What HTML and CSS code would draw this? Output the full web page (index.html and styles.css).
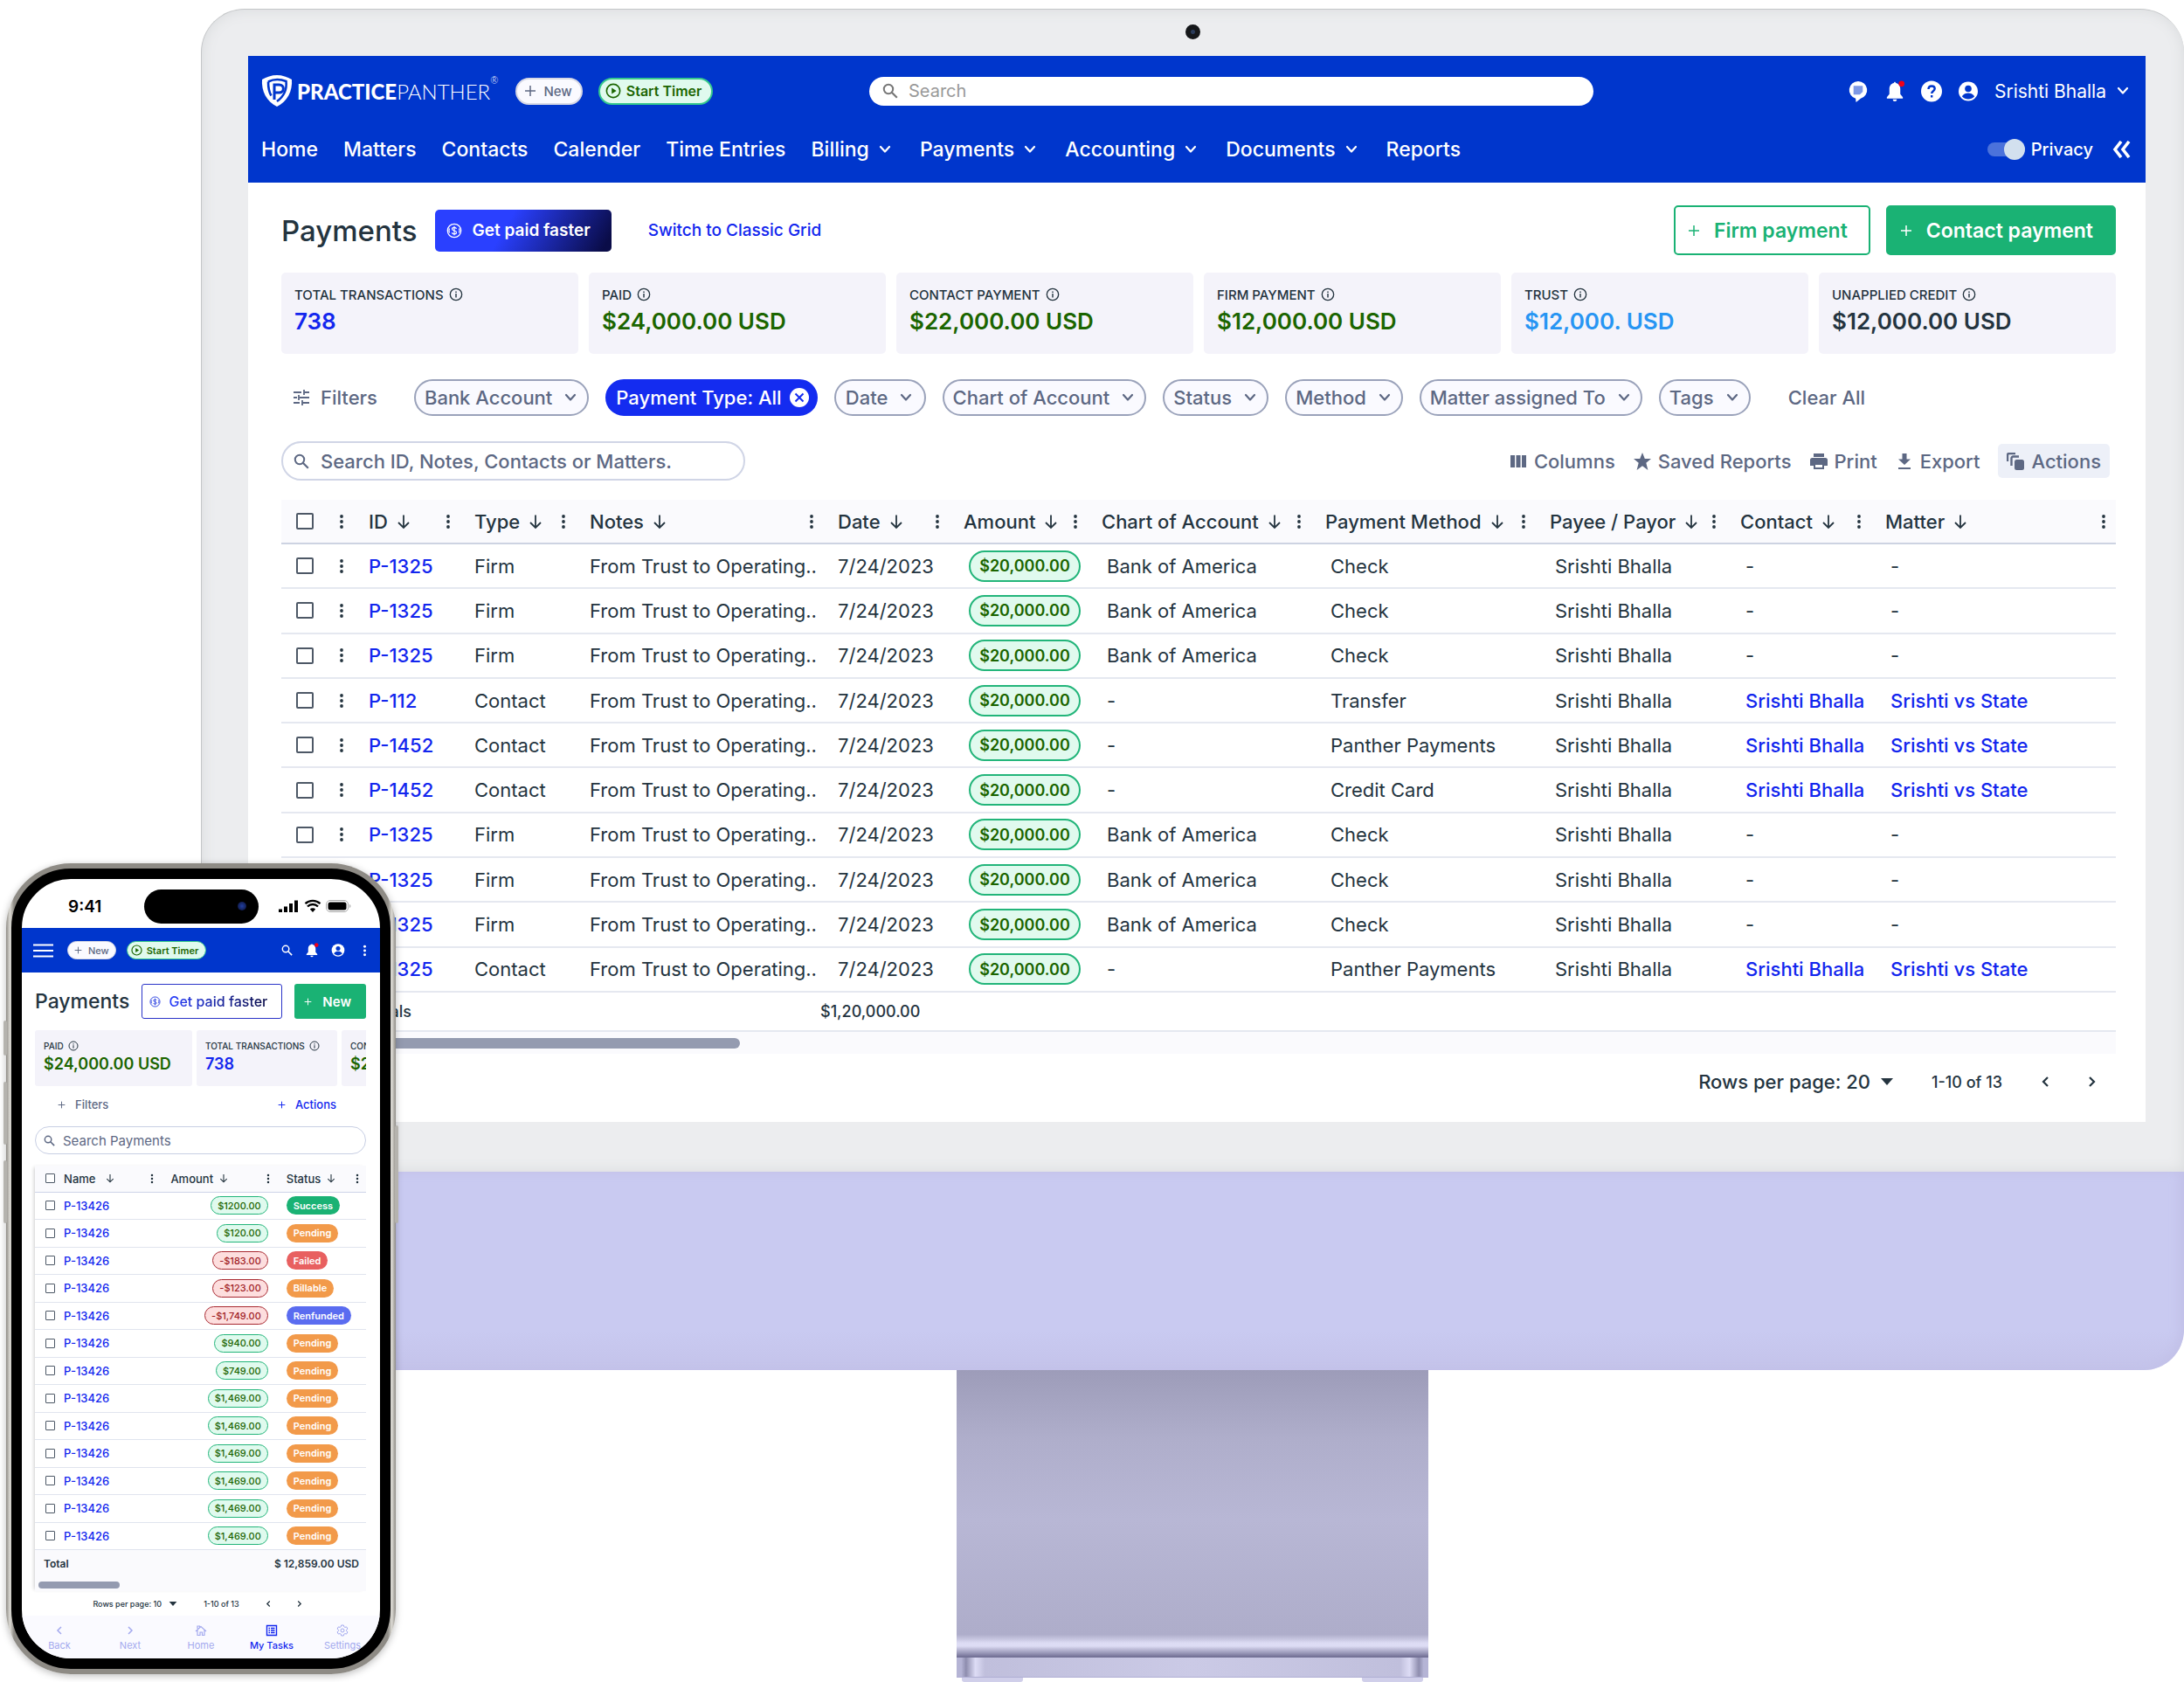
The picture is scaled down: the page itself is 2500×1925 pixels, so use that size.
FILE: index.html
```html
<!DOCTYPE html>
<html lang="en">
<head>
<meta charset="utf-8">
<title>PracticePanther Payments</title>
<link rel="stylesheet" href="styles.css">
</head>
<body>
<svg class="sprite" aria-hidden="true">
  <symbol id="chev" viewBox="0 0 14 10"><path d="M2 2l5 5.500 5-5.500" fill="none" stroke="currentColor" stroke-width="2.200" stroke-linecap="round" stroke-linejoin="round"/></symbol>
  <symbol id="down" viewBox="0 0 16 18"><path d="M8 1.500v14M2 10l6 6 6-6" fill="none" stroke="currentColor" stroke-width="1.800"/></symbol>
  <symbol id="dots" viewBox="0 0 6 18"><circle cx="3" cy="3" r="1.900"/><circle cx="3" cy="9" r="1.900"/><circle cx="3" cy="15" r="1.900"/></symbol>
  <symbol id="plus" viewBox="0 0 14 14"><path d="M7 1v12M1 7h12" stroke="currentColor" stroke-width="1.500" fill="none"/></symbol>
  <symbol id="glass" viewBox="0 0 18 18"><circle cx="7" cy="7" r="5.200" fill="none" stroke="currentColor" stroke-width="2"/><path d="M10.800 10.800l6 6" stroke="currentColor" stroke-width="2.200"/></symbol>
  <symbol id="info" viewBox="0 0 18 18"><circle cx="9" cy="9" r="7.500" fill="none" stroke="currentColor" stroke-width="1.500"/><path d="M9 8v5M9 5v1.800" stroke="currentColor" stroke-width="1.600"/></symbol>
  <symbol id="play" viewBox="0 0 20 20"><circle cx="10" cy="10" r="8.500" fill="none" stroke="currentColor" stroke-width="1.800"/><path d="M8 6.200l6 3.800-6 3.800z" fill="currentColor"/></symbol>
  <symbol id="coin" viewBox="0 0 18 18"><circle cx="9" cy="9" r="7.700" fill="none" stroke="currentColor" stroke-width="1.300"/><path d="M3.500 6.500a6 6 0 0 0 0 5M14.500 6.500a6 6 0 0 1 0 5M11.500 6.800C11.200 5.700 10.200 5.300 9 5.300c-1.400 0-2.500.6-2.500 1.800 0 2.600 5 1.200 5 3.800 0 1.200-1.100 1.900-2.500 1.900-1.300 0-2.400-.5-2.600-1.700M9 3.800v10.400" fill="none" stroke="currentColor" stroke-width="1.200"/></symbol>
  <symbol id="bell" viewBox="0 0 24 26"><path d="M11 3c0-1.600 2-1.600 2 0 3.800.8 5.500 3.500 5.500 7.500v6L21.500 20v1.500h-19V20l3-3.500v-6C5.500 6.500 7.200 3.800 11 3z" fill="currentColor"/><path d="M9.500 22.500h5a2.500 2.500 0 0 1-5 0z" fill="currentColor"/><circle cx="20" cy="4" r="3.500" fill="#f00018"/></symbol>
  <symbol id="user" viewBox="0 0 24 24"><circle cx="12" cy="12" r="11" fill="currentColor"/><circle cx="12" cy="9" r="3.800" fill="#0036cc"/><path d="M4.800 17.800c2-3 4.500-3.800 7.200-3.800s5.200.8 7.200 3.800c-4 4.300-10.400 4.300-14.400 0z" fill="#0036cc"/></symbol>
  <symbol id="left" viewBox="0 0 10 14"><path d="M8 2L3 7l5 5" fill="none" stroke="currentColor" stroke-width="2.200"/></symbol>
  <symbol id="right" viewBox="0 0 10 14"><path d="M2 2l5 5-5 5" fill="none" stroke="currentColor" stroke-width="2.200"/></symbol>
  <symbol id="caret" viewBox="0 0 14 8"><path d="M0 0h14L7 8z" fill="currentColor"/></symbol>
</svg>

<div class="stage">
<section class="monitor" aria-label="Desktop view">
  <div class="bezel">
    <div class="lens-row"><span class="lens"></span></div>
    <div class="screen">
      <header class="top">
        <div class="top-row">
          <div class="top-left">
            <a class="logo" href="#"><svg class="shield" viewBox="0 0 36 38"><path d="M18 1C12 1 6 3 1 6c-1 13 5 25 17 31C30 31 36 19 35 6 30 3 24 1 18 1z" fill="#fff"/><path d="M8 8.500C14 5.500 22 5.500 28.500 8c1 9-2 17-10.500 23" fill="none" stroke="#0036cc" stroke-width="2.600"/><path d="M8 8.500c0 7 1 12 3.500 16" fill="none" stroke="#0036cc" stroke-width="2.600"/><path d="M15 29V12h5.500c6.500 0 6.500 9 0 9H15" fill="none" stroke="#0036cc" stroke-width="3"/></svg><span><b>PRACTICE</b>PANTHER</span><sup>®</sup></a>
            <button class="chip-new"><svg class="i14"><use href="#plus"/></svg>New</button>
            <button class="chip-timer"><svg class="i18"><use href="#play"/></svg>Start Timer</button>
          </div>
          <label class="top-search"><svg class="i18"><use href="#glass"/></svg><input type="search" placeholder="Search" aria-label="Search"></label>
          <div class="top-right">
            <button aria-label="Messages"><svg class="i24" viewBox="0 0 24 26"><path d="M12 1a11 10.500 0 0 1 3 20.500L9.500 26 9 21.500A11 10.500 0 0 1 12 1z" fill="#fff"/><path d="M6.500 6.500h11v7l-3.500 3.500H6.500z" fill="#7d98e6"/></svg></button>
            <button aria-label="Notifications"><svg class="i24"><use href="#bell"/></svg></button>
            <button aria-label="Help"><svg class="i24" viewBox="0 0 24 24"><circle cx="12" cy="12" r="12" fill="#fff"/><path d="M8.500 9.500c0-2.200 1.500-3.500 3.600-3.500s3.600 1.300 3.600 3.100c0 2.600-3.500 2.800-3.500 5.400M12.200 16.500v2.500" fill="none" stroke="#0036cc" stroke-width="2.400"/></svg></button>
            <button aria-label="Account"><svg class="i24"><use href="#user"/></svg></button>
            <button class="who">Srishti Bhalla<svg class="chev"><use href="#chev"/></svg></button>
          </div>
        </div>
        <nav class="menu">
          <a href="#">Home</a><a href="#">Matters</a><a href="#">Contacts</a><a href="#">Calender</a><a href="#">Time Entries</a>
          <a class="drop" href="#">Billing<svg class="chev"><use href="#chev"/></svg></a>
          <a class="drop" href="#">Payments<svg class="chev"><use href="#chev"/></svg></a>
          <a class="drop" href="#">Accounting<svg class="chev"><use href="#chev"/></svg></a>
          <a class="drop" href="#">Documents<svg class="chev"><use href="#chev"/></svg></a>
          <a href="#">Reports</a>
          <div class="menu-end">
            <label class="privacy"><input type="checkbox" checked>Privacy</label>
            <button class="collapse" aria-label="Collapse"><svg viewBox="0 0 22 20"><path d="M10 1L3 10l7 9M19 1l-7 9 7 9" fill="none" stroke="#fff" stroke-width="3.600"/></svg></button>
          </div>
        </nav>
      </header>

      <main class="main">
        <div class="title-row">
          <h1>Payments</h1>
          <button class="paid-fast"><svg class="i18"><use href="#coin"/></svg>Get paid faster</button>
          <a class="switch" href="#">Switch to Classic Grid</a>
          <button class="firm"><svg class="i14"><use href="#plus"/></svg>Firm payment</button>
          <button class="contact"><svg class="i14"><use href="#plus"/></svg>Contact payment</button>
        </div>

        <div class="cards">
          <div class="card"><span>TOTAL TRANSACTIONS<svg><use href="#info"/></svg></span><strong class="blue">738</strong></div>
          <div class="card"><span>PAID<svg><use href="#info"/></svg></span><strong class="green">$24,000.00 USD</strong></div>
          <div class="card"><span>CONTACT PAYMENT<svg><use href="#info"/></svg></span><strong class="green">$22,000.00 USD</strong></div>
          <div class="card"><span>FIRM PAYMENT<svg><use href="#info"/></svg></span><strong class="green">$12,000.00 USD</strong></div>
          <div class="card"><span>TRUST<svg><use href="#info"/></svg></span><strong class="sky">$12,000. USD</strong></div>
          <div class="card"><span>UNAPPLIED CREDIT<svg><use href="#info"/></svg></span><strong>$12,000.00 USD</strong></div>
        </div>

        <div class="filters">
          <span class="filters-label"><svg class="i18" viewBox="0 0 18 18"><path d="M0 3h9M12 3h6M12 0v6M0 9h4M7 9h11M6 6v6M0 15h7M10 15h8M10 12v6" stroke="currentColor" stroke-width="1.800"/></svg>Filters</span>
          <button class="pill">Bank Account<svg class="chev"><use href="#chev"/></svg></button>
          <button class="pill on">Payment Type: All<svg class="cross" viewBox="0 0 22 22"><circle cx="11" cy="11" r="11" fill="#fff"/><path d="M6.500 6.500l9 9M15.500 6.500l-9 9" stroke="#142cf0" stroke-width="2"/></svg></button>
          <button class="pill">Date<svg class="chev"><use href="#chev"/></svg></button>
          <button class="pill">Chart of Account<svg class="chev"><use href="#chev"/></svg></button>
          <button class="pill">Status<svg class="chev"><use href="#chev"/></svg></button>
          <button class="pill">Method<svg class="chev"><use href="#chev"/></svg></button>
          <button class="pill">Matter assigned To<svg class="chev"><use href="#chev"/></svg></button>
          <button class="pill">Tags<svg class="chev"><use href="#chev"/></svg></button>
          <button class="clear">Clear All</button>
        </div>

        <div class="tools">
          <label class="find"><svg class="i18"><use href="#glass"/></svg><input type="search" placeholder="Search ID, Notes, Contacts or Matters." aria-label="Search payments"></label>
          <button><svg class="i20" viewBox="0 0 20 20"><path d="M1 3h5v14H1zM7.500 3h5v14h-5zM14 3h5v14h-5z" fill="currentColor"/></svg>Columns</button>
          <button><svg class="i20" viewBox="0 0 20 20"><path d="M10 0l2.800 7H20l-5.700 4.800L16.400 20 10 15.200 3.600 20l2.100-8.200L0 7h7.200z" fill="currentColor"/></svg>Saved Reports</button>
          <button><svg class="i20" viewBox="0 0 20 20"><path d="M4 1h12v4H4zM2.500 6h15A2.500 2.500 0 0 1 20 8.500V15h-4v-3H4v3H0V8.500A2.500 2.500 0 0 1 2.500 6z" fill="currentColor"/><path d="M5 13h10v5H5z" fill="none" stroke="currentColor" stroke-width="2"/></svg>Print</button>
          <button><svg class="i20" viewBox="0 0 20 20"><path d="M7.500 1h5v6.500H17L10 14 3 7.500h4.500zM3 17h14v2H3z" fill="currentColor"/></svg>Export</button>
          <button class="actions"><svg class="i20" viewBox="0 0 20 20"><rect x="9" y="8" width="11" height="12" rx="2.500" fill="currentColor"/><path d="M5.500 15V6.500a2 2 0 0 1 2-2H14M1 10V3a2 2 0 0 1 2-2h7" fill="none" stroke="currentColor" stroke-width="2.400"/></svg>Actions</button>
        </div>

        <table class="grid">
          <colgroup><col class="w58"><col class="w42"><col class="w121"><col class="w132"><col class="w284"><col class="w144"><col class="w158"><col class="w256"><col class="w257"><col class="w218"><col class="w166"><col class="w264"></colgroup>
          <thead><tr>
            <th><input type="checkbox" aria-label="Select all"></th>
            <th><svg class="dots"><use href="#dots"/></svg></th>
            <th><div>ID<svg class="down"><use href="#down"/></svg><svg class="dots"><use href="#dots"/></svg></div></th>
            <th><div>Type<svg class="down"><use href="#down"/></svg><svg class="dots"><use href="#dots"/></svg></div></th>
            <th><div>Notes<svg class="down"><use href="#down"/></svg><svg class="dots"><use href="#dots"/></svg></div></th>
            <th><div>Date<svg class="down"><use href="#down"/></svg><svg class="dots"><use href="#dots"/></svg></div></th>
            <th><div>Amount<svg class="down"><use href="#down"/></svg><svg class="dots"><use href="#dots"/></svg></div></th>
            <th><div>Chart of Account<svg class="down"><use href="#down"/></svg><svg class="dots"><use href="#dots"/></svg></div></th>
            <th><div>Payment Method<svg class="down"><use href="#down"/></svg><svg class="dots"><use href="#dots"/></svg></div></th>
            <th><div>Payee / Payor<svg class="down"><use href="#down"/></svg><svg class="dots"><use href="#dots"/></svg></div></th>
            <th><div>Contact<svg class="down"><use href="#down"/></svg><svg class="dots"><use href="#dots"/></svg></div></th>
            <th><div class="last">Matter<svg class="down"><use href="#down"/></svg><svg class="dots"><use href="#dots"/></svg></div></th>
          </tr></thead>
          <tbody>
            <tr><td><input type="checkbox" aria-label="Select row"></td><td><svg class="dots"><use href="#dots"/></svg></td><td><a href="#">P-1325</a></td><td>Firm</td><td>From Trust to Operating..</td><td>7/24/2023</td><td><span class="amt">$20,000.00</span></td><td>Bank of America</td><td>Check</td><td>Srishti Bhalla</td><td>-</td><td>-</td></tr>
            <tr><td><input type="checkbox" aria-label="Select row"></td><td><svg class="dots"><use href="#dots"/></svg></td><td><a href="#">P-1325</a></td><td>Firm</td><td>From Trust to Operating..</td><td>7/24/2023</td><td><span class="amt">$20,000.00</span></td><td>Bank of America</td><td>Check</td><td>Srishti Bhalla</td><td>-</td><td>-</td></tr>
            <tr><td><input type="checkbox" aria-label="Select row"></td><td><svg class="dots"><use href="#dots"/></svg></td><td><a href="#">P-1325</a></td><td>Firm</td><td>From Trust to Operating..</td><td>7/24/2023</td><td><span class="amt">$20,000.00</span></td><td>Bank of America</td><td>Check</td><td>Srishti Bhalla</td><td>-</td><td>-</td></tr>
            <tr><td><input type="checkbox" aria-label="Select row"></td><td><svg class="dots"><use href="#dots"/></svg></td><td><a href="#">P-112</a></td><td>Contact</td><td>From Trust to Operating..</td><td>7/24/2023</td><td><span class="amt">$20,000.00</span></td><td>-</td><td>Transfer</td><td>Srishti Bhalla</td><td><a href="#">Srishti Bhalla</a></td><td><a href="#">Srishti vs State</a></td></tr>
            <tr><td><input type="checkbox" aria-label="Select row"></td><td><svg class="dots"><use href="#dots"/></svg></td><td><a href="#">P-1452</a></td><td>Contact</td><td>From Trust to Operating..</td><td>7/24/2023</td><td><span class="amt">$20,000.00</span></td><td>-</td><td>Panther Payments</td><td>Srishti Bhalla</td><td><a href="#">Srishti Bhalla</a></td><td><a href="#">Srishti vs State</a></td></tr>
            <tr><td><input type="checkbox" aria-label="Select row"></td><td><svg class="dots"><use href="#dots"/></svg></td><td><a href="#">P-1452</a></td><td>Contact</td><td>From Trust to Operating..</td><td>7/24/2023</td><td><span class="amt">$20,000.00</span></td><td>-</td><td>Credit Card</td><td>Srishti Bhalla</td><td><a href="#">Srishti Bhalla</a></td><td><a href="#">Srishti vs State</a></td></tr>
            <tr><td><input type="checkbox" aria-label="Select row"></td><td><svg class="dots"><use href="#dots"/></svg></td><td><a href="#">P-1325</a></td><td>Firm</td><td>From Trust to Operating..</td><td>7/24/2023</td><td><span class="amt">$20,000.00</span></td><td>Bank of America</td><td>Check</td><td>Srishti Bhalla</td><td>-</td><td>-</td></tr>
            <tr><td><input type="checkbox" aria-label="Select row"></td><td><svg class="dots"><use href="#dots"/></svg></td><td><a href="#">P-1325</a></td><td>Firm</td><td>From Trust to Operating..</td><td>7/24/2023</td><td><span class="amt">$20,000.00</span></td><td>Bank of America</td><td>Check</td><td>Srishti Bhalla</td><td>-</td><td>-</td></tr>
            <tr><td><input type="checkbox" aria-label="Select row"></td><td><svg class="dots"><use href="#dots"/></svg></td><td><a href="#">P-1325</a></td><td>Firm</td><td>From Trust to Operating..</td><td>7/24/2023</td><td><span class="amt">$20,000.00</span></td><td>Bank of America</td><td>Check</td><td>Srishti Bhalla</td><td>-</td><td>-</td></tr>
            <tr><td><input type="checkbox" aria-label="Select row"></td><td><svg class="dots"><use href="#dots"/></svg></td><td><a href="#">P-1325</a></td><td>Contact</td><td>From Trust to Operating..</td><td>7/24/2023</td><td><span class="amt">$20,000.00</span></td><td>-</td><td>Panther Payments</td><td>Srishti Bhalla</td><td><a href="#">Srishti Bhalla</a></td><td><a href="#">Srishti vs State</a></td></tr>
          </tbody>
        </table>
        <div class="totals"><span>Totals</span><span>$1,20,000.00</span></div>
        <div class="track"><span></span></div>
        <div class="pager">
          <button class="rows">Rows per page: 20<svg class="caret"><use href="#caret"/></svg></button>
          <span>1-10 of 13</span>
          <button aria-label="Previous"><svg class="arrow"><use href="#left"/></svg></button>
          <button aria-label="Next"><svg class="arrow"><use href="#right"/></svg></button>
        </div>
      </main>
    </div>
  </div>
  <div class="chin"></div>
  <div class="stand"><div class="neck"></div><div class="foot"></div><div class="pads"><span></span><span></span></div></div>
</section>

<section class="phone" aria-label="Mobile view">
  <i class="key k1"></i><i class="key k2"></i><i class="key k3"></i><i class="key k4"></i>
  <div class="glass">
    <div class="status">
      <span class="clock">9:41</span>
      <span class="island"><i></i></span>
      <svg viewBox="0 0 84 16"><path d="M0 11.500h4V15H0zM6 8.500h4V15H6zM12 5h4v10h-4zM18 1.500h4V15h-4z"/><path d="M39 15l-3.200-3.500a4.500 4.500 0 0 1 6.400 0z"/><path d="M33 8.500a8.500 8.500 0 0 1 12 0M30.500 5.200a12.500 12.500 0 0 1 17 0" fill="none" stroke="#000" stroke-width="2.400"/><rect x="54.500" y="1.500" width="25" height="13" rx="4.500" fill="none" stroke="#aaa"/><rect x="56.500" y="3.500" width="21" height="9" rx="2.500"/><path d="M81 6v4c1.800-.5 1.800-3.500 0-4z" fill="#aaa"/></svg>
    </div>
    <header class="m-top">
      <button aria-label="Menu"><svg class="burger" viewBox="0 0 23 16"><path d="M0 1.500h23M0 8h23M0 14.500h23" stroke="#fff" stroke-width="2"/></svg></button>
      <button class="chip-new"><svg class="i9"><use href="#plus"/></svg>New</button>
      <button class="chip-timer"><svg class="i13"><use href="#play"/></svg>Start Timer</button>
      <div class="m-icons">
        <button aria-label="Search"><svg class="i13"><use href="#glass"/></svg></button>
        <button aria-label="Notifications"><svg class="i16"><use href="#bell"/></svg></button>
        <button aria-label="Account"><svg class="i16"><use href="#user"/></svg></button>
        <button aria-label="More"><svg class="m-dots"><use href="#dots"/></svg></button>
      </div>
    </header>
    <div class="m-body">
      <div class="m-title">
        <h2>Payments</h2>
        <button class="m-fast"><svg class="i13"><use href="#coin"/></svg><span>Get paid faster</span></button>
        <button class="m-new"><svg class="i9"><use href="#plus"/></svg>New</button>
      </div>
      <div class="m-cards">
        <div class="m-card wide"><span>PAID<svg><use href="#info"/></svg></span><strong class="green">$24,000.00 USD</strong></div>
        <div class="m-card"><span>TOTAL TRANSACTIONS<svg><use href="#info"/></svg></span><strong class="blue">738</strong></div>
        <div class="m-card"><span>CONTACT</span><strong class="green">$22,000.00</strong></div>
      </div>
      <div class="m-links"><button><svg class="i9"><use href="#plus"/></svg>Filters</button><button class="blue"><svg class="i9"><use href="#plus"/></svg>Actions</button></div>
      <label class="m-find"><svg class="i13"><use href="#glass"/></svg><input type="search" placeholder="Search Payments" aria-label="Search Payments"></label>
      <div class="m-sheet">
      <table class="m-grid">
        <colgroup><col class="c33"><col class="c122"><col class="c132"><col class="c90"></colgroup>
        <thead><tr><th><input type="checkbox" aria-label="Select all"></th><th><div class="wide">Name<svg class="down"><use href="#down"/></svg><svg class="dots"><use href="#dots"/></svg></div></th><th><div>Amount<svg class="down"><use href="#down"/></svg><svg class="dots"><use href="#dots"/></svg></div></th><th><div class="last">Status<svg class="down"><use href="#down"/></svg><svg class="dots"><use href="#dots"/></svg></div></th></tr></thead>
        <tbody>
          <tr><td><input type="checkbox" aria-label="Select row"></td><td><a href="#">P-13426</a></td><td><span class="m-amt">$1200.00</span></td><td><span class="tag ok">Success</span></td></tr>
          <tr><td><input type="checkbox" aria-label="Select row"></td><td><a href="#">P-13426</a></td><td><span class="m-amt">$120.00</span></td><td><span class="tag">Pending</span></td></tr>
          <tr><td><input type="checkbox" aria-label="Select row"></td><td><a href="#">P-13426</a></td><td><span class="m-amt neg">-$183.00</span></td><td><span class="tag bad">Failed</span></td></tr>
          <tr><td><input type="checkbox" aria-label="Select row"></td><td><a href="#">P-13426</a></td><td><span class="m-amt neg">-$123.00</span></td><td><span class="tag">Billable</span></td></tr>
          <tr><td><input type="checkbox" aria-label="Select row"></td><td><a href="#">P-13426</a></td><td><span class="m-amt neg">-$1,749.00</span></td><td><span class="tag back">Renfunded</span></td></tr>
          <tr><td><input type="checkbox" aria-label="Select row"></td><td><a href="#">P-13426</a></td><td><span class="m-amt">$940.00</span></td><td><span class="tag">Pending</span></td></tr>
          <tr><td><input type="checkbox" aria-label="Select row"></td><td><a href="#">P-13426</a></td><td><span class="m-amt">$749.00</span></td><td><span class="tag">Pending</span></td></tr>
          <tr><td><input type="checkbox" aria-label="Select row"></td><td><a href="#">P-13426</a></td><td><span class="m-amt">$1,469.00</span></td><td><span class="tag">Pending</span></td></tr>
          <tr><td><input type="checkbox" aria-label="Select row"></td><td><a href="#">P-13426</a></td><td><span class="m-amt">$1,469.00</span></td><td><span class="tag">Pending</span></td></tr>
          <tr><td><input type="checkbox" aria-label="Select row"></td><td><a href="#">P-13426</a></td><td><span class="m-amt">$1,469.00</span></td><td><span class="tag">Pending</span></td></tr>
          <tr><td><input type="checkbox" aria-label="Select row"></td><td><a href="#">P-13426</a></td><td><span class="m-amt">$1,469.00</span></td><td><span class="tag">Pending</span></td></tr>
          <tr><td><input type="checkbox" aria-label="Select row"></td><td><a href="#">P-13426</a></td><td><span class="m-amt">$1,469.00</span></td><td><span class="tag">Pending</span></td></tr>
          <tr><td><input type="checkbox" aria-label="Select row"></td><td><a href="#">P-13426</a></td><td><span class="m-amt">$1,469.00</span></td><td><span class="tag">Pending</span></td></tr>
        </tbody>
      </table>
      <div class="m-total"><span>Total</span><span>$ 12,859.00 USD</span></div>
      <div class="m-track"><span></span></div>
      </div>
      <div class="m-pager">
        <button>Rows per page: 10<svg class="caret"><use href="#caret"/></svg></button>
        <span>1-10 of 13</span>
        <button aria-label="Previous"><svg class="arrow"><use href="#left"/></svg></button>
        <button aria-label="Next"><svg class="arrow"><use href="#right"/></svg></button>
      </div>
    </div>
    <nav class="tabs">
      <a href="#"><svg viewBox="0 0 14 14"><path d="M9 3L5 7l4 4" fill="none" stroke="currentColor" stroke-width="1.500"/></svg>Back</a>
      <a href="#"><svg viewBox="0 0 14 14"><path d="M5 3l4 4-4 4" fill="none" stroke="currentColor" stroke-width="1.500"/></svg>Next</a>
      <a href="#"><svg viewBox="0 0 14 14"><path d="M1 8l6-5.500L13 8M3 6.500v6h3V9h2.500v3.500H11v-6M3 5V2h2.500v2" fill="none" stroke="currentColor" stroke-width="1.200"/></svg>Home</a>
      <a class="here" href="#"><svg viewBox="0 0 14 14"><path d="M1.500 1.500h11v11h-11zM3.500 4.500H5M3.500 7H5M3.500 9.500H5M6 4.500h4.500M6 7h4.500M6 9.500h4.500" fill="none" stroke="currentColor" stroke-width="1.400"/></svg>My Tasks</a>
      <a href="#"><svg viewBox="0 0 14 14"><path d="M5.700 1h2.600l.4 1.700 1.200.7 1.700-.5 1.300 2.200-1.300 1.200v1.400l1.300 1.200-1.300 2.200-1.700-.5-1.200.7-.4 1.700H5.700l-.4-1.700-1.200-.7-1.700.5-1.300-2.200 1.300-1.200V6.300L1.100 5.100l1.300-2.200 1.700.5 1.200-.7z" fill="none" stroke="currentColor"/><circle cx="7" cy="7" r="2" fill="none" stroke="currentColor"/></svg>Settings</a>
    </nav>
  </div>
</section>
</div>
</body>
</html>
```

FILE: styles.css
```css
* { box-sizing: border-box; }
body {
  margin: 0;
  background: #fff;
  color: #24343f;
  font-family: Inter, "Liberation Sans", sans-serif;
  font-size: 22px;
}
button { margin: 0; padding: 0; border: 0; background: none; color: inherit; font: inherit; display: inline-flex; align-items: center; white-space: nowrap; }
input[type="search"] { flex: 1; min-width: 0; margin: 0; padding: 0; border: 0; outline: 0; background: none; color: inherit; font: inherit; appearance: none; }
a { color: inherit; text-decoration: none; }
svg { flex: none; display: block; fill: currentColor; }
h1, h2 { margin: 0; font-weight: 500; }
.sprite { position: absolute; width: 0; height: 0; }
.i9 { width: 9px; height: 9px; }
.i13 { width: 13px; height: 13px; }
.i14 { width: 14px; height: 14px; }
.i16 { width: 16px; height: 17px; }
.i18 { width: 18px; height: 18px; }
.i20 { width: 20px; height: 20px; }
.i24 { width: 24px; height: 25px; }
.chev { width: 14px; height: 10px; }
.down { width: 16px; height: 18px; }
.dots { width: 6px; height: 18px; }
.blue { color: #1226ee; }
.green { color: #1b6500; }
.sky { color: #2795f3; }

.stage { position: relative; }

/* Desktop display */
.monitor { padding: 10px 0 0 230px; }
.bezel {
  padding: 0 44px 57px 53px;
  border: solid #c4c6c8;
  border-width: 1px 0 0 1px;
  border-radius: 50px 50px 0 0;
  background: #ecedef;
  box-shadow: inset 0 0 16px #d8dadc;
}
.lens-row { height: 53px; display: flex; align-items: center; justify-content: center; padding: 0 10px 2px 0; }
.lens { width: 17px; height: 17px; border-radius: 50%; background: radial-gradient(circle, #2a3b5a 0 2px, #15171a 3px); }
.screen { background: #fff; }
.chin { height: 227px; border-radius: 0 0 46px 0; background: linear-gradient(#c9caf1 80%, #c4c3ea); box-shadow: inset -6px 0 12px #c2c1e8; }
.stand { width: 540px; margin: 0 auto; }
.neck { height: 329px; background: linear-gradient(#9d9cb9, #afaecb 24%, #b8b7d5 52%, #aeadca 92%, #dddcf4 95%, #dddcf4 96%, #6c6a90); }
.foot { height: 23px; border-bottom: 1px solid #b0aed4; background: linear-gradient(90deg, #b5b4d5 1%, #8e8dae 2%, #dddcf5 4%, #c0bfdc 6%, #cbcae6 50%, #c0bfdc 94%, #dddcf5 96%, #8e8dae 98%, #b5b4d5 99%); }
.pads { display: flex; justify-content: space-between; padding: 0 6px; }
.pads span { width: 70px; height: 5px; border-radius: 0 0 3px 3px; background: #d0cfea; }

/* Desktop header */
.top { padding: 21px 16px 23px 15px; background: #0036cc; color: #fff; }
.top-row { display: grid; grid-template-columns: 696fr 829fr 616fr; align-items: center; height: 36px; }
.top-left { display: flex; align-items: center; }
.logo { display: flex; align-items: center; font: 300 24px Lato, sans-serif; margin-right: 20px; }
.logo b { font-weight: 900; }
.logo sup { align-self: flex-start; font-size: 11px; }
.shield { width: 36px; height: 38px; margin-right: 5px; }
.chip-new, .chip-timer { border-radius: 40px; font-size: 16px; font-weight: 500; }
.chip-new { height: 31px; padding: 0 10px 0 8px; gap: 8px; border: 2px solid #d6d8e4; background: #fafaff; color: #5d6883; font-size: 15px; }
.chip-timer { height: 31px; padding: 0 11px 0 6px; gap: 6px; margin-left: 18px; border: 2px solid #35c88c; background: #e0faee; color: #1b6500; font-weight: 600; }
.top-search { display: flex; align-items: center; gap: 12px; height: 33px; padding: 0 15px; border-radius: 17px; background: #fff; color: #777; font-size: 20px; }
.top-search input::placeholder { color: #999; }
.top-right { display: flex; align-items: center; justify-content: flex-end; gap: 18px; padding-right: 3px; font-size: 21px; }
.who { gap: 12px; }
.menu { display: flex; align-items: center; gap: 29px; height: 30px; margin-top: 35px; font-size: 23px; font-weight: 500; }
.drop { display: flex; align-items: center; gap: 11px; margin-right: 4px; }
.menu-end { display: flex; align-items: center; gap: 22px; margin-left: auto; }
.privacy { display: flex; align-items: center; gap: 7px; font-size: 20px; }
.privacy input { appearance: none; display: flex; align-items: center; justify-content: flex-end; width: 43px; height: 16px; margin: 0; border-radius: 8px; background: #4b72db; }
.privacy input::after { content: ""; width: 24px; height: 24px; border-radius: 50%; background: #d2e0ee; }
.collapse svg { width: 22px; height: 20px; }

/* Desktop content */
.main { padding: 26px 34px 14px 38px; }
.title-row { display: flex; align-items: center; height: 57px; }
h1 { font-size: 33px; }
.paid-fast { height: 48px; margin-left: 20px; padding: 0 24px 0 13px; gap: 12px; border-radius: 5px; background: linear-gradient(120deg, #2a40ff 40%, #0a0c48 95%); color: #fff; font-size: 19px; font-weight: 600; }
.switch { margin: 0 auto 0 42px; color: #1226ee; font-size: 19px; font-weight: 500; }
.firm, .contact { height: 57px; padding: 0 24px 0 14px; gap: 16px; border: 2px solid #1ab274; border-radius: 5px; font-size: 23px; font-weight: 600; color: #1ab274; }
.contact { margin-left: 18px; background: #1ab274; color: #fff; }
.cards { display: grid; grid-template-columns: repeat(6, 1fr); gap: 12px; margin-top: 20px; }
.card { height: 93px; padding: 15px 15px 0; border-radius: 5px; background: #f4f3fa; }
.card span { display: flex; align-items: center; gap: 6px; height: 20px; font-size: 15px; font-weight: 500; }
.card span svg { width: 16px; height: 16px; }
.card strong { display: block; margin-top: 4px; font-size: 26px; line-height: 34px; font-weight: 600; }
.filters { display: flex; align-items: center; gap: 19px; margin-top: 29px; color: #5d6883; font-weight: 500; }
.filters-label { display: flex; gap: 13px; align-items: center; margin: 0 23px 0 14px; }
.pill { justify-content: center; height: 42px; min-width: 105px; padding: 0 12px 0 10px; gap: 14px; border: 2px solid #9aa2ba; border-radius: 21px; background: #fafaff; }
.pill.on { padding: 0 8px 0 10px; gap: 9px; border-color: #142cf0; background: #142cf0; color: #fff; }
.cross { width: 22px; height: 22px; }
.clear { margin-left: 24px; }
.tools { display: flex; align-items: center; gap: 21px; margin-top: 29px; padding-right: 7px; color: #5d6883; font-weight: 500; }
.tools button { gap: 8px; }
.find { display: flex; align-items: center; gap: 13px; width: 531px; height: 45px; margin-right: auto; padding: 0 12px; border: 2px solid #d0d5e6; border-radius: 23px; }
.find input::placeholder, .m-find input::placeholder { color: #5d6883; }
.tools .actions { height: 39px; padding: 0 10px; border-radius: 5px; background: #edf0f8; }

.grid { width: 100%; height: 564px; margin-top: 22px; table-layout: fixed; border-collapse: collapse; }
.grid th, .grid td { padding: 0; text-align: left; font-weight: 400; white-space: nowrap; }
.grid th { height: 50px; border-bottom: 2px solid #cdd3e2; background: #fafafd; font-weight: 500; }
.grid td { border-bottom: 2px solid #e5e8f0; }
.grid th div { display: flex; align-items: center; gap: 10px; }
.grid th .dots { margin-left: 8px; }
.grid th div .dots { margin: 0 27px 0 auto; }
.grid th .last .dots { margin-right: 11px; }
.grid td .dots { margin-left: 8px; }
.grid td:nth-child(n+7) { padding-left: 6px; }
.grid a, .m-grid a { color: #1226ee; font-weight: 500; }
.grid input, .m-grid input { appearance: none; display: block; width: 20px; height: 19px; margin: 0 0 0 17px; border: 2px solid #4d5866; border-radius: 2px; background: #fff; }
.amt { display: flex; align-items: center; justify-content: center; width: 128px; height: 36px; border: 2px solid #22b57a; border-radius: 18px; background: #e0faee; color: #1b6500; font-size: 18px; font-weight: 600; }
.w58 { width: 58px; }
.w42 { width: 42px; }
.w121 { width: 121px; }
.w132 { width: 132px; }
.w284 { width: 284px; }
.w144 { width: 144px; }
.w158 { width: 158px; }
.w256 { width: 256px; }
.w257 { width: 257px; }
.w218 { width: 218px; }
.w166 { width: 166px; }
.w264 { width: 264px; }
.totals { display: flex; align-items: center; height: 45px; padding-left: 97px; border-bottom: 2px solid #e5e8f0; font-size: 18px; font-weight: 500; }
.totals span { flex: 0 0 520px; }
.track { display: flex; align-items: center; height: 25px; background: #fafafd; }
.track span { width: 25%; height: 12px; border-radius: 6px; background: #949bb0; }
.pager { display: flex; align-items: center; justify-content: flex-end; height: 64px; padding-right: 22px; gap: 44px; font-weight: 500; }
.pager span { font-size: 18px; }
.rows { gap: 12px; }
.caret { width: 14px; height: 8px; }
.arrow { width: 10px; height: 14px; }

/* Handset */
.phone {
  position: absolute;
  isolation: isolate;
  left: 7px;
  top: 988px;
  width: 446px;
  height: 928px;
  padding: 6px;
  border-radius: 74px;
  background: linear-gradient(90deg, #8e8b85, #dcdad4 1%, #8e8b85 2%, #8e8b85 98%, #dcdad4 99%, #8e8b85);
  box-shadow: 0 2px 8px #0004;
  font-size: 13px;
}
.key { position: absolute; z-index: -1; left: -3px; width: 4px; border-radius: 2px; background: #b5b3ae; }
.k1 { top: 180px; height: 40px; }
.k2 { top: 250px; height: 72px; }
.k3 { top: 340px; height: 72px; }
.k4 { left: auto; right: -3px; top: 300px; height: 112px; }
.glass { height: 100%; display: flex; flex-direction: column; border: 12px solid #000; border-radius: 68px; background: #fff; overflow: hidden; }
.status { display: grid; grid-template-columns: 1fr 131px 1fr; align-items: center; height: 56px; padding: 6px 0 0; flex: none; color: #000; }
.clock { padding-left: 53px; font-size: 19px; font-weight: 600; }
.island { display: flex; align-items: center; justify-content: flex-end; height: 39px; padding-right: 14px; border-radius: 20px; background: #000; }
.island i { width: 10px; height: 10px; border-radius: 50%; background: radial-gradient(#2340a0, #0a0f30); }
.status svg { width: 84px; height: 16px; margin-left: 23px; }
.m-top { flex: none; display: flex; align-items: center; height: 51px; padding: 0 15px 0 13px; background: #0036cc; color: #fff; }
.burger { width: 23px; height: 16px; }
.m-top .chip-new, .m-top .chip-timer { height: 21px; font-size: 11px; border-width: 1px; }
.m-top .chip-new { margin-left: 16px; padding: 0 7px; gap: 7px; }
.m-top .chip-timer { margin-left: 12px; padding: 0 8px 0 4px; gap: 5px; }
.m-icons { display: flex; align-items: center; gap: 14px; margin-left: auto; }
.m-dots { width: 5px; height: 14px; margin-left: 6px; }
.m-body { flex: none; padding: 13px 16px 0 15px; }
.m-title { display: flex; align-items: center; justify-content: space-between; height: 40px; }
h2 { font-size: 23px; }
.m-fast { height: 40px; padding: 0 16px 0 8px; gap: 9px; border: 1px solid #2a34c8; border-radius: 3px; color: #2a40e0; font-size: 16px; font-weight: 500; }
.m-fast span { background: linear-gradient(90deg, #2a40ff, #0a0c48); background-clip: text; color: transparent; }
.m-new { height: 40px; padding: 0 17px 0 11px; gap: 12px; border-radius: 3px; background: #1ab274; color: #fff; font-size: 15px; font-weight: 600; }
.m-cards { display: flex; gap: 5px; margin-top: 13px; overflow: hidden; }
.m-card { flex: 0 0 161px; height: 64px; padding: 10px 10px 0; border-radius: 3px; background: #f4f3fa; }
.m-card.wide { flex-basis: 180px; }
.m-card span { display: flex; align-items: center; gap: 5px; height: 16px; font-size: 10px; font-weight: 500; white-space: nowrap; }
.m-card span svg { width: 12px; height: 12px; }
.m-card strong { display: block; margin-top: 2px; font-size: 18px; line-height: 22px; font-weight: 600; white-space: nowrap; }
.m-links { display: flex; justify-content: space-between; height: 46px; padding: 0 34px 4px 26px; color: #5d6883; font-weight: 500; }
.m-links button { gap: 11px; }
.m-links .blue { color: #1226ee; }
.m-find { display: flex; align-items: center; gap: 9px; height: 32px; padding: 0 9px; border: 1px solid #c8cfe4; border-radius: 16px; color: #5d6883; font-size: 15px; }
.m-sheet { margin-top: 13px; box-shadow: -3px 0 4px -2px #0003; }
.m-grid { width: 100%; height: 440px; table-layout: fixed; border-collapse: collapse; }
.m-grid th, .m-grid td { padding: 0; text-align: left; }
.m-grid th { height: 30px; border-bottom: 1px solid #cdd3e8; background: #fafafd; font-weight: 500; }
.m-grid td { border-bottom: 1px solid #e0e4ee; }
.m-grid input { width: 11px; height: 11px; margin-left: 12px; border-width: 1px; border-radius: 1px; }
.m-grid .down { width: 10px; height: 11px; }
.m-grid .dots { width: 4px; height: 12px; margin: 0 19px 0 auto; }
.m-grid div { display: flex; align-items: center; gap: 7px; }
.m-grid .wide { gap: 12px; }
.m-grid .last .dots { margin-right: 8px; }
.m-grid td:nth-child(3) { padding-right: 21px; text-align: right; }
.m-amt, .tag { display: inline-flex; align-items: center; height: 21px; padding: 0 8px; border-radius: 11px; font-size: 11px; font-weight: 500; vertical-align: middle; }
.m-amt { padding: 0 7px; border: 1px solid #22b57a; background: #e0faee; color: #1b6500; }
.m-amt.neg { border-color: #a82830; background: #fddede; color: #a01c24; }
.tag { background: #f29a4a; color: #fff; font-weight: 600; }
.tag.ok { background: #1ab274; }
.tag.bad { background: #e86060; }
.tag.back { background: #5a6cf0; }
.c33 { width: 33px; }
.c122 { width: 122px; }
.c132 { width: 132px; }
.c90 { width: 91px; }
.m-total { display: flex; align-items: center; justify-content: space-between; height: 31px; padding: 0 8px 0 10px; background: #fafafd; font-size: 12px; font-weight: 600; }
.m-track { height: 16px; padding: 5px 4px; background: #fafafd; }
.m-track span { display: block; width: 93px; height: 8px; border-radius: 4px; background: #949bb0; }
.m-pager { display: flex; align-items: center; justify-content: center; gap: 30px; height: 28px; padding-right: 7px; font-size: 9px; font-weight: 500; }
.m-pager button { gap: 8px; }
.m-pager .caret { width: 10px; height: 5px; }
.m-pager .arrow { width: 6px; height: 9px; }
.tabs { flex: 1; display: grid; grid-template-columns: repeat(5, 81px); justify-content: center; align-content: start; padding-top: 10px; background: #fafaff; color: #a3a9ee; font-size: 11px; }
.tabs a { display: flex; flex-direction: column; align-items: center; gap: 3px; }
.tabs svg { width: 14px; height: 14px; }
.tabs .here { color: #1226ee; font-weight: 500; }
```
